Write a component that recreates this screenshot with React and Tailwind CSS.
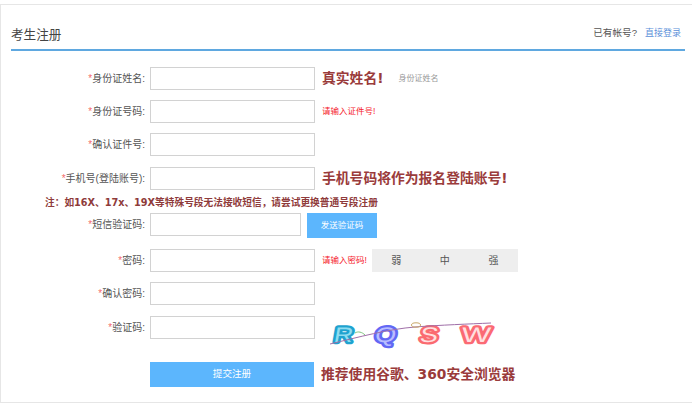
const cjk = "font-['Liberation_Sans','Noto_Sans_CJK_SC',sans-serif]"

function Row({ label, width = 'w-[165px]', className = '', children }) {
  return (
    <div className={`flex items-start ${className}`}>
      <label className="w-[150px] pr-[5px] text-right text-[10px] leading-[23px] text-[#555] whitespace-nowrap">
        <span className="text-[#f56c6c]">*</span>{label}:
      </label>
      <input className={`${width} h-[23px] border border-[#d2d2d2] bg-white outline-none shrink-0`} />
      {children}
    </div>
  )
}

function Tip({ children }) {
  return (
    <span className="ml-[7px] text-[13.8px] leading-[23px] font-bold text-[#9a3b3b] whitespace-nowrap font-['DejaVu_Sans','Noto_Sans_CJK_SC',sans-serif]">
      {children}
    </span>
  )
}

function Warn({ children }) {
  return <span className="ml-[7px] text-[8.5px] leading-[23px] text-[#f5222d] whitespace-nowrap">{children}</span>
}

function Captcha() {
  return (
    <svg width="170" height="26" viewBox="0 0 170 26" className="ml-[14px] mt-[6px] -mb-[9px] shrink-0 overflow-visible">
      <g fontFamily="'Liberation Sans', sans-serif" fontSize="21" strokeWidth="4.5" strokeLinejoin="round" paintOrder="stroke">
        <text transform="translate(4 20) skewX(-10)" fill="#8fdcf0" stroke="#1fa3cf" textLength="19" lengthAdjust="spacingAndGlyphs">R</text>
        <text transform="translate(45 20) skewX(-10)" fill="#b9bdff" stroke="#6268f4" textLength="21" lengthAdjust="spacingAndGlyphs">Q</text>
        <text transform="translate(90 20) skewX(-10)" fill="#ffe0e0" stroke="#fb6a70" textLength="18" lengthAdjust="spacingAndGlyphs">S</text>
        <text transform="translate(132 19.5) skewX(-6)" fill="#ffe0e0" stroke="#fb6a74" textLength="29" lengthAdjust="spacingAndGlyphs">W</text>
      </g>
      <path d="M1 22 C30 15 60 7 86 5 S140 2 162 1" fill="none" stroke="#a06fa8" strokeWidth="1" />
      <ellipse cx="87" cy="3" rx="4.5" ry="2.2" fill="none" stroke="#c9a766" strokeWidth="1" />
      <path d="M26 11 C29 9 33 10 36 13" fill="none" stroke="#7fc47f" strokeWidth="1" />
    </svg>
  )
}

export default function App() {
  return (
    <div className={`h-[417px] w-[692px] bg-white pt-[4px] ${cjk}`}>
      <div className="h-[399px] border-t border-b border-l border-[#e6e6e6] pl-[10px] pr-[7px]">
        <div className="flex h-[46px] items-end justify-between border-b-2 border-[#5fa8e0] pb-[6px]">
          <h1 className="text-[12.6px] leading-[16px] text-[#444]">考生注册</h1>
          <p className="mb-[2px] pr-[4px] text-[9.6px] leading-[16px] text-[#555]">
            已有帐号?<a className="ml-[8px] text-[9px] text-[#5b8fd9]">直接登录</a>
          </p>
        </div>

        <form className="-ml-[11px] mt-[16px]">
          <Row label="身份证姓名">
            <Tip>真实姓名!</Tip>
            <span className="ml-[15px] text-[8px] leading-[23px] text-[#999]">身份证姓名</span>
          </Row>
          <Row label="身份证号码" className="mt-[10px]"><Warn>请输入证件号!</Warn></Row>
          <Row label="确认证件号" className="mt-[10px]" />
          <Row label="手机号(登陆账号)" className="mt-[11px]"><Tip>手机号码将作为报名登陆账号!</Tip></Row>
          <p className="ml-[45px] mt-[6px] text-[9.7px] leading-[14px] font-bold text-[#8f3b3b] whitespace-nowrap font-['DejaVu_Sans','Noto_Sans_CJK_SC',sans-serif]">
            注{'\uFF1A'}如16X、17x、19X等特殊号段无法接收短信{'\uFF0C'}请尝试更换普通号段注册
          </p>
          <Row label="短信验证码" width="w-[151px]" className="mt-[3px]">
            <button type="button" className="ml-[6px] h-[25px] w-[70px] bg-[#5cb6fd] text-[8.5px] text-white">发送验证码</button>
          </Row>
          <Row label="密码" className="mt-[11px]">
            <Warn>请输入密码!</Warn>
            <div className="ml-[5px] grid h-[23px] w-[146px] grid-cols-3 items-center bg-[#eeeeee] text-center text-[10px] text-[#555]">
              <span>弱</span><span>中</span><span>强</span>
            </div>
          </Row>
          <Row label="确认密码" className="mt-[10px]" />
          <Row label="验证码" className="mt-[11px]"><Captcha /></Row>
          <div className="ml-[150px] mt-[23px] flex items-center">
            <button type="button" className="h-[25px] w-[164px] bg-[#5cb6fd] text-[9.6px] text-white">提交注册</button>
            <Tip>推荐使用谷歌、360安全浏览器</Tip>
          </div>
        </form>
      </div>
    </div>
  )
}
